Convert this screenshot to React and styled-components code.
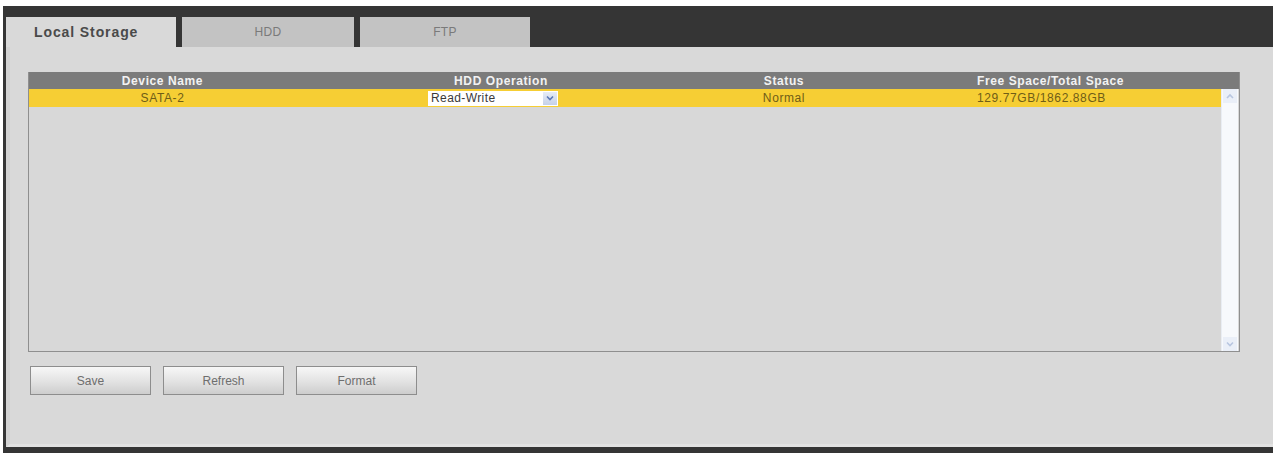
import React from "react";
import styled, { createGlobalStyle } from "styled-components";

const Global = createGlobalStyle`
  html, body { margin: 0; padding: 0; background: #ffffff; }
  body { font-family: "Liberation Sans", Arial, sans-serif; }
`;

const Frame = styled.div`
  margin: 6px 0 0 3px;
  width: 1270px;
  height: 447px;
  box-sizing: border-box;
  background: #353535;
  border-left: 3px solid #353535;
  padding: 11px 0 6px 0;
  display: flex;
  flex-direction: column;
`;

const TabBar = styled.div`
  display: flex;
  gap: 6px;
  height: 30px;
`;

const Tab = styled.div`
  width: ${(p) => p.$w}px;
  display: flex;
  align-items: center;
  justify-content: ${(p) => (p.$active ? "flex-start" : "center")};
  padding-left: ${(p) => (p.$active ? "28px" : "0")};
  box-sizing: border-box;
  background: ${(p) => (p.$active ? "#d9d9d9" : "#c3c3c3")};
  color: ${(p) => (p.$active ? "#4a4a4a" : "#7a7a7a")};
  font-size: ${(p) => (p.$active ? "14px" : "12px")};
  letter-spacing: ${(p) => (p.$active ? "0.9px" : "0.3px")};
  font-weight: ${(p) => (p.$active ? "bold" : "normal")};
`;

const Content = styled.div`
  flex: 1;
  background: #d9d9d9;
  border-left: 4px solid #d2d2d2;
  border-bottom: 3px solid #e2e2e2;
  padding: 25px 0 0 18px;
  display: flex;
  flex-direction: column;
  box-sizing: border-box;
`;

const Table = styled.div`
  width: 1212px;
  height: 280px;
  display: flex;
  flex-direction: column;
  box-sizing: border-box;
  border: 1px solid #8f8f8f;
  border-top: none;
  background: #d8d8d8;
`;

const HeaderRow = styled.div`
  display: grid;
  grid-template-columns: 267px 410px 156px 1fr;
  height: 17px;
  background: #7b7b7b;
  align-items: center;
`;

const HeadCell = styled.div`
  text-align: center;
  color: #f2f2f2;
  font-size: 12px;
  letter-spacing: 0.6px;
  font-weight: bold;
`;

const Body = styled.div`
  flex: 1;
  display: flex;
`;

const Rows = styled.div`
  flex: 1;
`;

const Row = styled.div`
  display: grid;
  grid-template-columns: 267px 410px 156px 1fr;
  height: 18px;
  background: #f6ce34;
  align-items: center;
`;

const Cell = styled.div`
  color: #6f5d17;
  font-size: 12px;
  letter-spacing: 0.6px;
  display: flex;
  justify-content: center;
  align-items: center;
`;

const Select = styled.div`
  width: 130px;
  height: 15px;
  margin-left: -16px;
  background: #ffffff;
  display: flex;
  align-items: center;
  justify-content: space-between;
  box-sizing: border-box;
  padding-left: 3px;
  color: #3a3a3a;
  font-size: 12px;
  letter-spacing: 0.4px;
`;

const SelectArrow = styled.div`
  width: 14px;
  height: 13px;
  margin-right: 1px;
  background: linear-gradient(#e6ecf7, #c5d1e8);
  display: flex;
  align-items: center;
  justify-content: center;
`;

const Scrollbar = styled.div`
  width: 16px;
  margin: 0 1px 0 0;
  background: #f7f9fc;
  border-left: 1px solid #e9edf3;
  display: flex;
  flex-direction: column;
  justify-content: space-between;
  align-items: center;
`;

const ScrollBtn = styled.div`
  width: 14px;
  height: 14px;
  background: #eaeff8;
  display: flex;
  align-items: center;
  justify-content: center;
`;

const Buttons = styled.div`
  display: flex;
  gap: 12px;
  margin-top: 14px;
  padding-left: 2px;
`;

const Button = styled.button`
  width: 121px;
  height: 29px;
  box-sizing: border-box;
  border: 1px solid #8d8d8d;
  background: linear-gradient(#f7f7f7, #e2e2e2 55%, #cdcdcd);
  color: #6e6e6e;
  font-family: "Liberation Sans", Arial, sans-serif;
  font-size: 12px;
  padding: 0;
`;

const Chevron = ({ up, color = "#5a78b8" }) => (
  <svg width="8" height="6" viewBox="0 0 8 6">
    <path
      d={up ? "M1 5 L4 2 L7 5" : "M1 1.5 L4 4.5 L7 1.5"}
      fill="none"
      stroke={color}
      strokeWidth="1.6"
    />
  </svg>
);

export default function App() {
  return (
    <>
      <Global />
      <Frame>
        <TabBar>
          <Tab $active $w={170}>Local Storage</Tab>
          <Tab $w={172}>HDD</Tab>
          <Tab $w={170}>FTP</Tab>
        </TabBar>
        <Content>
          <Table>
            <HeaderRow>
              <HeadCell>Device Name</HeadCell>
              <HeadCell>HDD Operation</HeadCell>
              <HeadCell>Status</HeadCell>
              <HeadCell>Free Space/Total Space</HeadCell>
            </HeaderRow>
            <Body>
              <Rows>
                <Row>
                  <Cell>SATA-2</Cell>
                  <Cell>
                    <Select>
                      Read-Write
                      <SelectArrow>
                        <Chevron />
                      </SelectArrow>
                    </Select>
                  </Cell>
                  <Cell>Normal</Cell>
                  <Cell>129.77GB/1862.88GB</Cell>
                </Row>
              </Rows>
              <Scrollbar>
                <ScrollBtn>
                  <Chevron up color="#b8c6e0" />
                </ScrollBtn>
                <ScrollBtn>
                  <Chevron color="#b8c6e0" />
                </ScrollBtn>
              </Scrollbar>
            </Body>
          </Table>
          <Buttons>
            <Button>Save</Button>
            <Button>Refresh</Button>
            <Button>Format</Button>
          </Buttons>
        </Content>
      </Frame>
    </>
  );
}
